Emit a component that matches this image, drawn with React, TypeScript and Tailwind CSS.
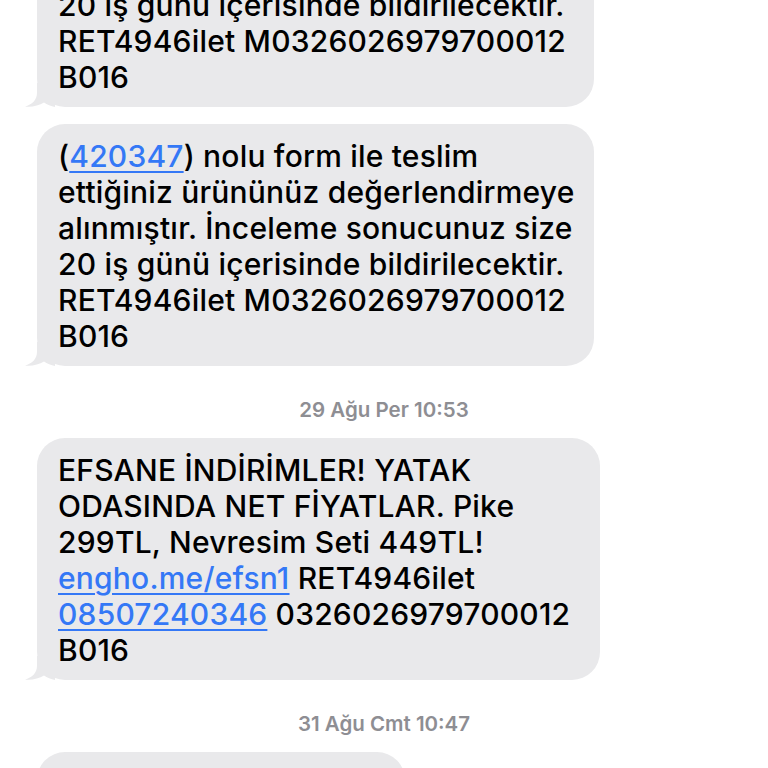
type Seg = { t: string; link?: boolean };
type Line = Seg[];

const formLines: Line[] = [
  [{ t: '(' }, { t: '420347', link: true }, { t: ') nolu form ile teslim' }],
  [{ t: 'ettiğiniz ürününüz değerlendirmeye' }],
  [{ t: 'alınmıştır. İnceleme sonucunuz size' }],
  [{ t: '20 iş günü içerisinde bildirilecektir.' }],
  [{ t: 'RET4946ilet M0326026979700012' }],
  [{ t: 'B016' }],
];

const promoLines: Line[] = [
  [{ t: 'EFSANE İNDİRİMLER! YATAK' }],
  [{ t: 'ODASINDA NET FİYATLAR. Pike' }],
  [{ t: '299TL, Nevresim Seti 449TL!' }],
  [{ t: 'engho.me/efsn1', link: true }, { t: ' RET4946ilet' }],
  [{ t: '08507240346', link: true }, { t: ' 0326026979700012' }],
  [{ t: 'B016' }],
];

function Tail() {
  return (
    <svg
      className="absolute bottom-0 -left-[12px] h-[24px] w-[30px]"
      viewBox="0 0 30 24"
      fill="#e9e9eb"
    >
      <path d="M12 0 L12 10 C12 17 7 21.5 0 23.6 C7 24.4 14 22.6 19 19.5 C22 21.5 26 23.4 30 24 L30 0 Z" />
    </svg>
  );
}

function Bubble({ lines, width, className = '' }: { lines: Line[]; width: string; className?: string }) {
  return (
    <div className={`relative ${width} ${className}`}>
      <div className="rounded-[28px] bg-[#e9e9eb] pt-[14px] pb-[12px] pl-[21px] text-[30px] leading-[36px] font-medium tracking-[0.2px] text-black">
        {lines.map((line, i) => (
          <div key={i} className="whitespace-nowrap">
            {line.map((seg, j) =>
              seg.link ? (
                <span key={j} className="text-[#3478f6] underline decoration-[2px] underline-offset-[4px]">
                  {seg.t}
                </span>
              ) : (
                <span key={j}>{seg.t}</span>
              )
            )}
          </div>
        ))}
      </div>
      <Tail />
    </div>
  );
}

function Stamp({ text }: { text: string }) {
  return (
    <div className="-ml-[37px] flex h-[72px] items-center justify-center pt-[16px] text-[20.5px] font-semibold text-[#8e8e93]">
      {text}
    </div>
  );
}

export default function App() {
  return (
    <div
      className="h-[768px] w-[768px] overflow-hidden bg-white"
      style={{ fontFamily: 'Inter, "Noto Sans", sans-serif' }}
    >
      <div className="-mt-[135px] flex flex-col pl-[37px]">
        <Bubble lines={formLines} width="w-[557px]" />
        <Bubble lines={formLines} width="w-[557px]" className="mt-[17px]" />
        <Stamp text="29 Ağu Per 10:53" />
        <Bubble lines={promoLines} width="w-[563px]" />
        <Stamp text="31 Ağu Cmt 10:47" />
        <div className="h-[60px] w-[368px] rounded-t-[28px] bg-[#e9e9eb]" />
      </div>
    </div>
  );
}
